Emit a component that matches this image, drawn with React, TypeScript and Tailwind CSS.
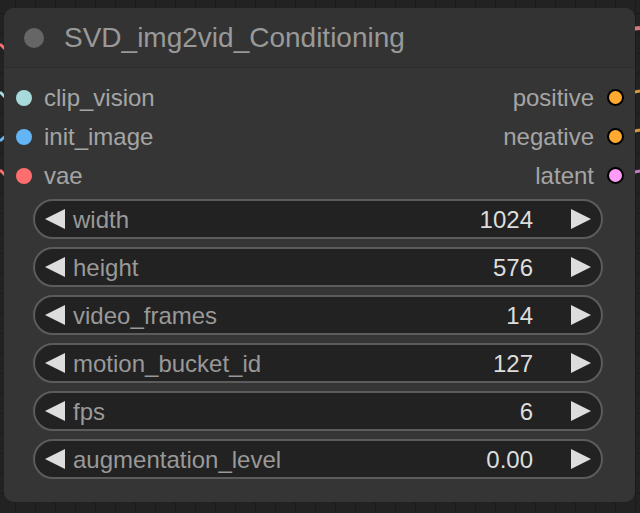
import React from 'react'

const INPUTS = [
  { name: 'clip_vision', color: 'bg-[#a8dadc]' },
  { name: 'init_image', color: 'bg-[#64b5f6]' },
  { name: 'vae', color: 'bg-[#ff6e6e]' },
]

const OUTPUTS = [
  { name: 'positive', color: 'bg-[#ffa931]' },
  { name: 'negative', color: 'bg-[#ffa931]' },
  { name: 'latent', color: 'bg-[#ff9cf9]' },
]

const WIDGETS = [
  { name: 'width', value: '1024' },
  { name: 'height', value: '576' },
  { name: 'video_frames', value: '14' },
  { name: 'motion_bucket_id', value: '127' },
  { name: 'fps', value: '6' },
  { name: 'augmentation_level', value: '0.00' },
]

function Arrow({ dir }: { dir: 'left' | 'right' }) {
  return (
    <svg width="20" height="20" viewBox="0 0 20 20" className="shrink-0">
      {dir === 'left'
        ? <polygon points="20,0 20,20 0,10" fill="#dddddd" />
        : <polygon points="0,0 0,20 20,10" fill="#dddddd" />}
    </svg>
  )
}

function Widget({ name, value }: { name: string; value: string }) {
  return (
    <div className="h-10 flex items-center rounded-full border-2 border-[#5c5c5c] bg-[#222222] pl-[10px] pr-[10px]">
      <Arrow dir="left" />
      <span className="ml-2 pt-[2px] text-[#999999]">{name}</span>
      <span className="ml-auto pt-[2px] text-[#dddddd]">{value}</span>
      <span className="ml-[38px]"><Arrow dir="right" /></span>
    </div>
  )
}

export default function App() {
  return (
    <div
      className="relative w-[640px] h-[513px] overflow-hidden bg-[#222222] bg-[linear-gradient(#1b1b1b_1px,transparent_1px),linear-gradient(90deg,#1b1b1b_1px,transparent_1px)] bg-[size:20px_20px] bg-[position:15px_13px]"
      style={{ fontFamily: '"Liberation Sans", Arial, sans-serif' }}
    >
      {/* wires peeking out from behind the node */}
      <svg className="absolute inset-0" width="640" height="513">
        <path d="M0 44 C2 46 4 48 6 50" stroke="#ff6e6e" strokeWidth="3" fill="none" />
        <path d="M0 92 C2 94 4 96 6 98" stroke="#a8dadc" strokeWidth="3" fill="none" />
        <path d="M0 141 C2 139 4 137 6 136" stroke="#64b5f6" strokeWidth="3" fill="none" />
        <path d="M0 170 C2 172 4 174 6 176" stroke="#ff6e6e" strokeWidth="3" fill="none" />
        <path d="M630 29 L640 28" stroke="#d87878" strokeWidth="4" fill="none" />
        <path d="M630 93 L640 91" stroke="#d8983a" strokeWidth="3" fill="none" />
        <path d="M630 132 L640 130" stroke="#d8983a" strokeWidth="3" fill="none" />
        <path d="M630 173 L640 171" stroke="#c07ac0" strokeWidth="3" fill="none" />
      </svg>

      <div className="absolute left-[4px] top-[8px] w-[631px] h-[494px] rounded-[10px] bg-[#353535] flex flex-col">
        {/* title */}
        <div className="h-[60px] flex items-center border-b border-[#2c2c2c] rounded-t-[10px] bg-[#333333]">
          <span className="ml-[20px] w-5 h-5 rounded-full bg-[#666666]" />
          <span className="ml-[20px] text-[28px] text-[#999999]">SVD_img2vid_Conditioning</span>
        </div>

        {/* slots */}
        <div className="pt-[10px] flex justify-between text-[24px]">
          <div className="flex flex-col">
            {INPUTS.map(s => (
              <div key={s.name} className="h-[39px] flex items-center pl-[12px]">
                <span className={`w-4 h-4 rounded-full ${s.color}`} />
                <span className="ml-[12px] text-[#a5a5a5]">{s.name}</span>
              </div>
            ))}
          </div>
          <div className="flex flex-col items-end">
            {OUTPUTS.map(s => (
              <div key={s.name} className="h-[39px] flex items-center pr-[11px]">
                <span className="text-[#a5a5a5]">{s.name}</span>
                <span className={`ml-[13px] w-[17px] h-[17px] rounded-full border-2 border-black ${s.color}`} />
              </div>
            ))}
          </div>
        </div>

        {/* widgets */}
        <div className="mt-[4px] pl-[29px] pr-[32px] flex flex-col gap-2 text-[24px]">
          {WIDGETS.map(w => <Widget key={w.name} {...w} />)}
        </div>
      </div>
    </div>
  )
}
